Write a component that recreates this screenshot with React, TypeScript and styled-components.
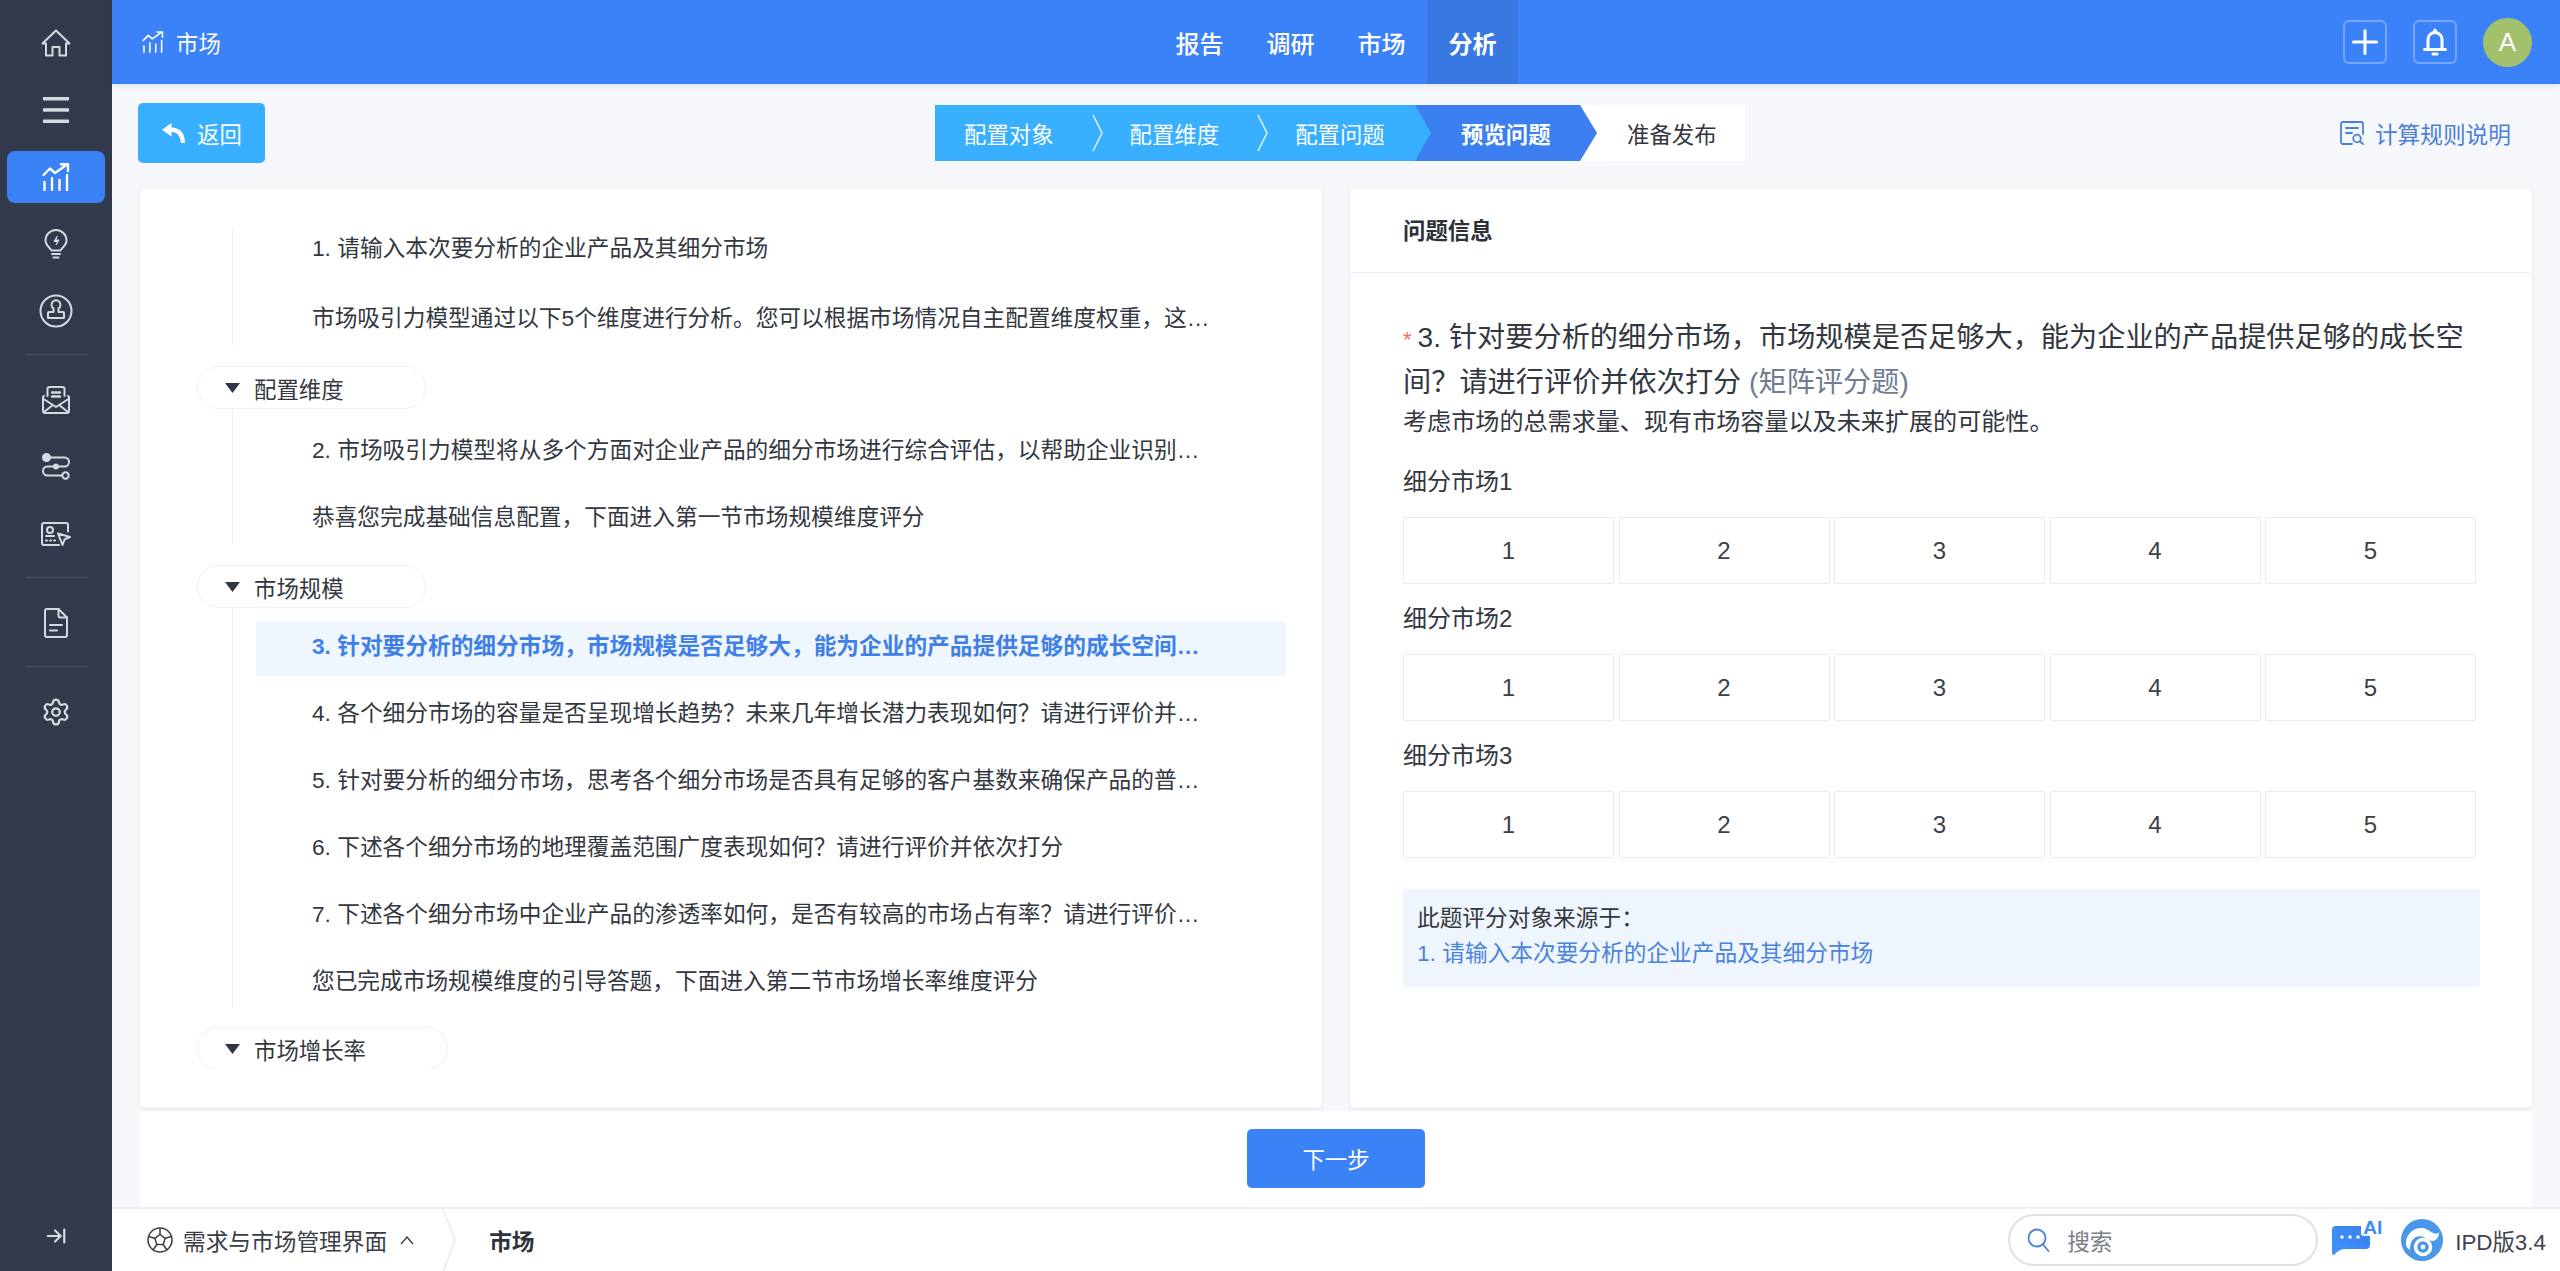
import React from "react";
import styled, { createGlobalStyle } from "styled-components";
import { ArrowRightToLine, Settings } from "lucide-react";

const FONT = `"Liberation Sans", "Noto Sans CJK SC", sans-serif`;

const Global = createGlobalStyle`
  html, body { margin: 0; padding: 0; background: #f5f7fb; }
  body { font-family: ${FONT}; color: #33373f; overflow: hidden; }
  * { box-sizing: border-box; }
`;

const Page = styled.div`
  display: flex;
  width: 2560px;
  height: 1271px;
  overflow: hidden;
  background: #f5f7fb;
`;

/* ---------- sidebar ---------- */
const Sidebar = styled.nav`
  width: 112px;
  flex: none;
  display: flex;
  flex-direction: column;
  align-items: center;
  padding-top: 9px;
  background: #323a4b;
  color: #d5d9e0;
`;
const NavItem = styled.div`
  width: 100%;
  height: 67px;
  flex: none;
  display: flex;
  align-items: center;
  justify-content: center;
`;
const NavActive = styled.div`
  width: 98px;
  height: 52px;
  border-radius: 8px;
  background: #3b82f6;
  color: #fff;
  display: flex;
  align-items: center;
  justify-content: center;
`;
const NavDivider = styled.div`
  width: 63px;
  height: 1px;
  flex: none;
  margin: 10px 0 11px;
  background: #4a5264;
`;
const Collapse = styled.div`
  margin-top: auto;
  margin-bottom: 24px;
  display: flex;
  color: #d5d9e0;
`;

/* ---------- main column ---------- */
const Main = styled.div`
  flex: 1;
  min-width: 0;
  display: flex;
  flex-direction: column;
`;
const TopBar = styled.header`
  height: 84px;
  flex: none;
  display: grid;
  grid-template-columns: 1fr auto 1fr;
  align-items: stretch;
  background: #3b82f8;
  color: #fff;
  box-shadow: 0 2px 8px rgba(40, 60, 100, 0.08);
`;
const Brand = styled.div`
  display: flex;
  align-items: center;
  gap: 12px;
  padding-left: 30px;
  font-size: 22.4px;
`;
const Tabs = styled.div`
  display: flex;
`;
const Tab = styled.div<{ $active?: boolean }>`
  width: 91px;
  display: flex;
  align-items: center;
  justify-content: center;
  font-size: 24px;
  font-weight: ${(p) => (p.$active ? 700 : 500)};
  background: ${(p) => (p.$active ? "#3878e2" : "transparent")};
`;
const Actions = styled.div`
  display: flex;
  align-items: center;
  justify-content: flex-end;
  gap: 26px;
  padding-right: 28px;
`;
const IconBox = styled.div`
  width: 44px;
  height: 44px;
  border: 2px solid rgba(255, 255, 255, 0.3);
  border-radius: 6px;
  display: flex;
  align-items: center;
  justify-content: center;
`;
const Avatar = styled.div`
  width: 49px;
  height: 49px;
  border-radius: 50%;
  background: #a3c16c;
  display: flex;
  align-items: center;
  justify-content: center;
  font-size: 26px;
  color: #fff;
`;

const Toolbar = styled.div`
  height: 105px;
  flex: none;
  display: grid;
  grid-template-columns: 1fr auto 1fr;
  align-items: start;
  padding: 19px 18px 0 26px;
`;
const BackButton = styled.button`
  width: 127px;
  height: 60px;
  border: 0;
  border-radius: 5px;
  background: #38b0ff;
  color: #fff;
  font: 22.4px ${FONT};
  display: flex;
  align-items: center;
  gap: 12px;
  padding: 0 0 0 24px;
`;
const Steps = styled.div`
  display: flex;
  height: 56px;
  margin-top: 2px;
  font-size: 22.4px;
`;
const StepDone = styled.div`
  position: relative;
  z-index: 3;
  width: 496px;
  display: flex;
  align-items: center;
  padding-left: 29px;
  color: #fff;
  background: #38b0ff;
  clip-path: polygon(0 0, 480px 0, 496px 50%, 480px 100%, 0 100%);
`;
const StepSep = styled.svg`
  width: 11px;
  height: 36px;
  margin: 0 27px 0 38px;
  flex: none;
`;
const StepCurrent = styled.div`
  position: relative;
  z-index: 2;
  width: 182px;
  margin-left: -16px;
  display: flex;
  align-items: center;
  padding-left: 46px;
  color: #fff;
  font-weight: 700;
  background: #3b7ff0;
  clip-path: polygon(0 0, 165px 0, 182px 50%, 165px 100%, 0 100%);
`;
const StepNext = styled.div`
  width: 165px;
  margin-left: -17px;
  display: flex;
  align-items: center;
  padding-left: 47px;
  background: #fff;
  color: #33373f;
`;
const RuleLink = styled.div`
  justify-self: end;
  display: flex;
  align-items: center;
  gap: 11px;
  height: 60px;
  margin-right: 31px;
  font-size: 22.7px;
  color: #4a80d8;
`;

const Panels = styled.div`
  height: 919px;
  flex: none;
  display: grid;
  grid-template-columns: 1182px 1182px;
  gap: 28px;
  padding: 0 28px;
`;
const Panel = styled.section`
  background: #fff;
  min-width: 0;
  border-radius: 4px;
  box-shadow: 0 1px 3px rgba(60, 80, 120, 0.12);
`;

/* ---------- tree ---------- */
const TreeScroll = styled.div`
  height: 880px;
  overflow: hidden;
  padding-top: 39px;
  padding-right: 36px;
`;
const TreeGroup = styled.div<{ $first?: boolean; $top?: number }>`
  margin-left: 92px;
  border-left: 1px solid #eef0f4;
  padding-top: ${(p) => p.$top ?? 0}px;
  padding-left: 23px;
  display: flex;
  flex-direction: column;
  gap: ${(p) => (p.$first ? 15 : 12)}px;
  & > :first-child {
    margin-top: ${(p) => (p.$first ? -5 : 0)}px;
  }
  & > :last-child {
    margin-bottom: -3px;
  }
`;
const TreeRow = styled.div<{ $active?: boolean }>`
  height: 55px;
  flex: none;
  padding: 0 74px 4px 56px;
  line-height: 51px;
  font-size: 22.7px;
  white-space: nowrap;
  overflow: hidden;
  text-overflow: ellipsis;
  border-radius: 3px;
  color: ${(p) => (p.$active ? "#3f80e8" : "#33373f")};
  font-weight: ${(p) => (p.$active ? 700 : 400)};
  background: ${(p) => (p.$active ? "#eff6fe" : "transparent")};
`;
const TreePill = styled.div<{ $gap?: number }>`
  display: inline-flex;
  align-items: center;
  align-self: flex-start;
  gap: 14px;
  height: 43px;
  margin: ${(p) => p.$gap ?? 21}px 0 0 57px;
  padding: 0 81px 0 27px;
  border: 1px solid #f0f1f5;
  border-radius: 22px;
  background: #fff;
  font-size: 22.4px;
  white-space: nowrap;
  flex: none;
`;
const Caret = styled.svg`
  width: 15px;
  height: 10px;
  flex: none;
`;
const TreeRoot = styled.div`
  display: flex;
  flex-direction: column;
`;

/* ---------- question ---------- */
const PanelHead = styled.div`
  height: 84px;
  display: flex;
  align-items: center;
  padding: 0 0 3px 53px;
  border-bottom: 1px solid #eef0f3;
  font-size: 22.4px;
  font-weight: 700;
  color: #2c3038;
`;
const PanelBody = styled.div`
  padding: 43px 56px 0 53px;
`;
const Question = styled.div`
  font-size: 28.2px;
  line-height: 42px;
  color: #33373f;
  white-space: nowrap;
`;
const Required = styled.span`
  color: #f56c6c;
  font-size: 22px;
  margin-right: 6px;
`;
const QuestionType = styled.span`
  color: #6f7c91;
`;
const Hint = styled.div`
  margin-top: 1px;
  font-size: 24.1px;
  line-height: 36px;
`;
const MatrixLabel = styled.div<{ $first?: boolean }>`
  margin-top: ${(p) => (p.$first ? 24 : 17)}px;
  font-size: 24px;
  line-height: 36px;
`;
const Cells = styled.div`
  display: grid;
  grid-template-columns: repeat(5, 211px);
  gap: 4.5px;
  margin-top: 17px;
`;
const Cell = styled.div`
  height: 67px;
  display: flex;
  align-items: center;
  justify-content: center;
  border: 1px solid #e8eaee;
  border-radius: 2px;
  font-size: 24px;
  color: #3c4048;
`;
const SourceBox = styled.div`
  width: 1077px;
  height: 98px;
  margin-top: 31px;
  padding: 12px 14px;
  background: #eff5fc;
  font-size: 22.7px;
  line-height: 35px;
`;
const SourceLink = styled.div`
  color: #4a83dc;
`;

/* ---------- actions / footer ---------- */
const ActionBar = styled.div`
  height: 96px;
  flex: none;
  margin: 3px 28px 0;
  padding-bottom: 2px;
  background: #fff;
  display: flex;
  align-items: center;
  justify-content: center;
`;
const NextButton = styled.button`
  width: 178px;
  height: 59px;
  border: 0;
  border-radius: 5px;
  background: #3b82f6;
  color: #fff;
  font: 22.4px ${FONT};
`;
const Footer = styled.footer`
  flex: 1;
  min-height: 0;
  display: flex;
  align-items: center;
  padding: 0 14px 0 35px;
  background: #fff;
  border-top: 2px solid #eef0f3;
  font-size: 22.7px;
`;
const ModuleName = styled.div`
  display: flex;
  align-items: center;
  gap: 10px;
  color: #3a3e46;
`;
const UpCaret = styled.svg`
  width: 14px;
  height: 10px;
  margin-left: 3px;
`;
const CrumbSep = styled.svg`
  width: 14px;
  height: 63px;
  margin: 0 33px 0 28px;
  flex: none;
`;
const CrumbCurrent = styled.div`
  font-weight: 700;
  color: #2f333b;
`;
const FooterRight = styled.div`
  margin-left: auto;
  display: flex;
  align-items: center;
`;
const SearchBox = styled.div`
  width: 310px;
  height: 52px;
  display: flex;
  align-items: center;
  gap: 17px;
  padding-left: 17px;
  border: 2px solid #dfe1e5;
  border-radius: 26px;
  color: #7b7f86;
`;
const AiBadge = styled.div`
  position: relative;
  width: 51px;
  height: 36px;
  margin: -4px 0 0 13px;
`;
const AiText = styled.span`
  position: absolute;
  top: -1px;
  right: 0;
  font-size: 19px;
  font-weight: 700;
  color: #3b8cf6;
  background: #fff;
  border-radius: 3px 0 0 3px;
  line-height: 17px;
  padding-left: 2px;
`;
const LogoWrap = styled.div`
  display: flex;
  align-items: center;
  gap: 12px;
  margin-left: 19px;
  font-size: 22.4px;
  color: #40444c;
`;

/* ---------- icons ---------- */
const line = {
  fill: "none",
  stroke: "currentColor",
  strokeWidth: 2,
  strokeLinecap: "round" as const,
  strokeLinejoin: "round" as const,
};

const HomeIcon = () => (
  <svg width="30" height="28" viewBox="0 0 30 28" {...line}>
    <path d="M1.5 14.5 15 1.5l13.5 13H25V26.5h-6.5V18h-7v8.500H5V14.500Z" />
  </svg>
);
const MenuIcon = () => (
  <svg width="26" height="26" viewBox="0 0 26 26" fill="currentColor">
    <rect x="0" y="0" width="26" height="3.500" />
    <rect x="0" y="11.200" width="26" height="3.500" />
    <rect x="0" y="22.500" width="26" height="3.500" />
  </svg>
);
const TrendIcon = ({ size = 28, width = 2.4 }: { size?: number; width?: number }) => (
  <svg width={size} height={size} viewBox="0 0 28 28" {...line} strokeWidth={width}>
    <path d="M1.500 12 8 5.500l5 4.500L25 1.500" />
    <path d="M19 1.200h7V8" />
    <path d="M2.500 19v8M10 15v12M17.500 17v10M25 12v15" />
  </svg>
);
const BulbIcon = () => (
  <svg width="24" height="30" viewBox="0 0 24 30" {...line}>
    <path d="M7.500 21.500C7 19 1.500 17 1.500 11.500a10.500 10.500 0 0 1 21 0c0 5.500-5.500 7.500-6 10Z" />
    <path d="M8 25h8M9.500 28.500h5" />
    <path d="M13 7.500 10 12.500h3.500l-1.500 3.500 3-5H12Z" fill="currentColor" strokeWidth={1} />
  </svg>
);
const StampIcon = () => (
  <svg width="34" height="34" viewBox="0 0 34 34" {...line}>
    <circle cx="17" cy="17" r="15.500" />
    <path d="M14.500 14.500a4.500 4.500 0 1 1 5 0V18H24a1 1 0 0 1 1 1v5H9v-5a1 1 0 0 1 1-1h4.500Z" />
  </svg>
);
const MailIcon = () => (
  <svg width="28" height="28" viewBox="0 0 28 28" {...line}>
    <path d="M5.500 10V3a2 2 0 0 1 2-2h13a2 2 0 0 1 2 2v7" />
    <path d="M2 10 1 11v14a2 2 0 0 0 2 2h22a2 2 0 0 0 2-2V11l-1-1" />
    <path d="M1.500 13 14 21l12.500-8M2 26l9-7M26 26l-9-7" />
    <path d="M10 6.500h8M10 10.500h8" strokeWidth={2.400} />
  </svg>
);
const FlowIcon = () => (
  <svg width="28" height="28" viewBox="0 0 28 28" {...line}>
    <circle cx="4.500" cy="4.500" r="3.500" fill="currentColor" />
    <path d="M8 4.500h14.500a4.500 4.500 0 0 1 0 9h-17a4.500 4.500 0 0 0 0 9H20" />
    <circle cx="23.500" cy="22.500" r="3.200" />
    <circle cx="14" cy="13.500" r="2" fill="currentColor" />
  </svg>
);
const CardIcon = () => (
  <svg width="30" height="24" viewBox="0 0 30 24" {...line}>
    <path d="M27 9.500V3a2 2 0 0 0-2-2H3a2 2 0 0 0-2 2v18a2 2 0 0 0 2 2h15" />
    <circle cx="9" cy="8" r="3" />
    <path d="M5 14h8" />
    <path d="M5 18.500h1M9 18.500h1M13 18.500h1" />
    <path d="M17 11.500 29 15l-5.500 2.500L21.500 23Z" />
  </svg>
);
const DocIcon = () => (
  <svg width="24" height="30" viewBox="0 0 24 30" {...line}>
    <path d="M14.500 1H3a2 2 0 0 0-2 2v24a2 2 0 0 0 2 2h18a2 2 0 0 0 2-2V9.500Z" />
    <path d="M14.500 1v6.500a2 2 0 0 0 2 2H23" />
    <path d="M6 17h12M6 22.500h7" />
  </svg>
);
const PlusIcon = () => (
  <svg width="26" height="26" viewBox="0 0 26 26" fill="none" stroke="#fff" strokeWidth={3} strokeLinecap="round">
    <path d="M13 1.500v23M1.500 13h23" />
  </svg>
);
const BellIcon = () => (
  <svg width="24" height="28" viewBox="0 0 24 28" fill="none" stroke="#fff" strokeWidth={3} strokeLinecap="round" strokeLinejoin="round">
    <path d="M5 21V11.500a7 7 0 0 1 14 0V21" />
    <path d="M1.500 21.500h21" />
    <circle cx="12" cy="2.500" r="1.500" fill="#fff" strokeWidth={1} />
    <path d="M10 26h4" />
  </svg>
);
const BackIcon = () => (
  <svg width="23" height="20" viewBox="0 0 23 20" fill="#fff">
    <path d="M9.500 0 0 6.800l9.500 6.700V9c6 0 8.500 3.500 9.500 11h4C23 10 18 4.800 9.500 4.500Z" />
  </svg>
);
const RuleIcon = () => (
  <svg width="24" height="24" viewBox="0 0 24 24" fill="none" stroke="#4a80d8" strokeWidth={1.800} strokeLinecap="round" strokeLinejoin="round">
    <path d="M12 23H3a2 2 0 0 1-2-2V3a2 2 0 0 1 2-2h18a2 2 0 0 1 2 2v10" />
    <path d="M6 7h12M6 12h6" />
    <circle cx="17" cy="17.500" r="3.800" />
    <path d="m20 20.500 3 2.500" />
  </svg>
);
const WheelIcon = () => (
  <svg width="26" height="26" viewBox="0 0 26 26" fill="none" stroke="#3a3e46" strokeWidth={1.500} strokeLinejoin="round">
    <circle cx="13" cy="13" r="12" />
    <path d="M13 7.500 18.200 11.300 16.200 17.500H9.800L7.800 11.300Z" />
    <path d="M13 7.500V1.200M18.200 11.300 24.500 9.500M16.200 17.500 20 23M9.800 17.500 6 23M7.800 11.300 1.500 9.500" />
  </svg>
);
const SearchIcon = () => (
  <svg width="23" height="24" viewBox="0 0 23 24" fill="none" strokeWidth={1.800} strokeLinecap="round">
    <circle cx="10" cy="10" r="8.500" stroke="#4a80d8" />
    <path d="m16.500 17 5 6" stroke="#5a7fb8" />
  </svg>
);
const ChatIcon = () => (
  <svg width="40" height="31" viewBox="0 0 40 31" style={{ position: "absolute", left: 0, bottom: 0 }}>
    <defs>
      <linearGradient id="chat" x1="0" y1="1" x2="1" y2="0">
        <stop offset="0" stopColor="#3f94fb" />
        <stop offset="1" stopColor="#3a7ff0" />
      </linearGradient>
    </defs>
    <path d="M5 1h30a4 4 0 0 1 4 4v15a4 4 0 0 1-4 4H14C9 24 6 27 3 30 1 30 1 28 1 26V5a4 4 0 0 1 4-4Z" fill="url(#chat)" />
    <circle cx="11" cy="12" r="1.800" fill="#fff" />
    <circle cx="19" cy="12" r="1.800" fill="#fff" />
    <circle cx="27" cy="12" r="1.800" fill="#fff" />
  </svg>
);
const LogoIcon = () => (
  <svg width="42" height="42" viewBox="0 0 42 42">
    <circle cx="21" cy="21" r="21" fill="#4a97ea" />
    <path d="M5 26C4 16 12 8 22 9c4 .5 6 3 10 5 3 1 5 1 6-1 0 7-5 11-10 8-4-2-8-5-13-3-4 2-6 6-6 13-2-1-3.500-3-4-5Z" fill="#fff" />
    <circle cx="22" cy="28" r="7.500" fill="none" stroke="#fff" strokeWidth={3.500} />
    <circle cx="22" cy="28" r="2.400" fill="#fff" />
  </svg>
);
const CaretDown = () => (
  <Caret viewBox="0 0 15 10">
    <path d="M0 0h15L7.500 10Z" fill="#2f3644" />
  </Caret>
);

const StepChevron = () => (
  <StepSep viewBox="0 0 11 36" fill="none" stroke="rgba(255,255,255,.85)" strokeWidth={1.500}>
    <path d="M1 0l9 18-9 18" />
  </StepSep>
);

const matrixRows = ["细分市场1", "细分市场2", "细分市场3"];

const Tree = () => (
  <TreeRoot>
    <TreeGroup $first>
      <TreeRow>1. 请输入本次要分析的企业产品及其细分市场</TreeRow>
      <TreeRow>市场吸引力模型通过以下5个维度进行分析。您可以根据市场情况自主配置维度权重，这些权重将用于后续的综合评估计算</TreeRow>
    </TreeGroup>
    <TreePill>
      <CaretDown />
      配置维度
    </TreePill>
    <TreeGroup $top={16}>
      <TreeRow>2. 市场吸引力模型将从多个方面对企业产品的细分市场进行综合评估，以帮助企业识别最具潜力的市场</TreeRow>
      <TreeRow>恭喜您完成基础信息配置，下面进入第一节市场规模维度评分</TreeRow>
    </TreeGroup>
    <TreePill>
      <CaretDown />
      市场规模
    </TreePill>
    <TreeGroup $top={13}>
      <TreeRow $active>3. 针对要分析的细分市场，市场规模是否足够大，能为企业的产品提供足够的成长空间？请进行评价并依次打分</TreeRow>
      <TreeRow>4. 各个细分市场的容量是否呈现增长趋势？未来几年增长潜力表现如何？请进行评价并依次打分</TreeRow>
      <TreeRow>5. 针对要分析的细分市场，思考各个细分市场是否具有足够的客户基数来确保产品的普及？请进行评价</TreeRow>
      <TreeRow>6. 下述各个细分市场的地理覆盖范围广度表现如何？请进行评价并依次打分</TreeRow>
      <TreeRow>7. 下述各个细分市场中企业产品的渗透率如何，是否有较高的市场占有率？请进行评价并依次打分</TreeRow>
      <TreeRow>您已完成市场规模维度的引导答题，下面进入第二节市场增长率维度评分</TreeRow>
    </TreeGroup>
    <TreePill $gap={19}>
      <CaretDown />
      市场增长率
    </TreePill>
  </TreeRoot>
);

export default function App() {
  return (
    <Page>
      <Global />
      <Sidebar>
        <NavItem><HomeIcon /></NavItem>
        <NavItem><MenuIcon /></NavItem>
        <NavItem><NavActive><TrendIcon /></NavActive></NavItem>
        <NavItem><BulbIcon /></NavItem>
        <NavItem><StampIcon /></NavItem>
        <NavDivider />
        <NavItem><MailIcon /></NavItem>
        <NavItem><FlowIcon /></NavItem>
        <NavItem><CardIcon /></NavItem>
        <NavDivider />
        <NavItem><DocIcon /></NavItem>
        <NavDivider />
        <NavItem><Settings size={30} strokeWidth={1.800} /></NavItem>
        <Collapse><ArrowRightToLine size={22} strokeWidth={2.400} /></Collapse>
      </Sidebar>
      <Main>
        <TopBar>
          <Brand>
            <TrendIcon size={22} width={2} />
            市场
          </Brand>
          <Tabs>
            <Tab>报告</Tab>
            <Tab>调研</Tab>
            <Tab>市场</Tab>
            <Tab $active>分析</Tab>
          </Tabs>
          <Actions>
            <IconBox><PlusIcon /></IconBox>
            <IconBox><BellIcon /></IconBox>
            <Avatar>A</Avatar>
          </Actions>
        </TopBar>
        <Toolbar>
          <BackButton><BackIcon />返回</BackButton>
          <Steps>
            <StepDone>
              配置对象
              <StepChevron />
              配置维度
              <StepChevron />
              配置问题
            </StepDone>
            <StepCurrent>预览问题</StepCurrent>
            <StepNext>准备发布</StepNext>
          </Steps>
          <RuleLink><RuleIcon />计算规则说明</RuleLink>
        </Toolbar>
        <Panels>
          <Panel>
            <TreeScroll><Tree /></TreeScroll>
          </Panel>
          <Panel>
            <PanelHead>问题信息</PanelHead>
            <PanelBody>
              <Question>
                <Required>*</Required>3. 针对要分析的细分市场，市场规模是否足够大，能为企业的产品提供足够的成长空<br />
                间？请进行评价并依次打分 <QuestionType>(矩阵评分题)</QuestionType>
              </Question>
              <Hint>考虑市场的总需求量、现有市场容量以及未来扩展的可能性。</Hint>
              {matrixRows.map((label, i) => (
                <React.Fragment key={label}>
                  <MatrixLabel $first={i === 0}>{label}</MatrixLabel>
                  <Cells>
                    {[1, 2, 3, 4, 5].map((n) => (
                      <Cell key={n}>{n}</Cell>
                    ))}
                  </Cells>
                </React.Fragment>
              ))}
              <SourceBox>
                此题评分对象来源于：
                <SourceLink>1. 请输入本次要分析的企业产品及其细分市场</SourceLink>
              </SourceBox>
            </PanelBody>
          </Panel>
        </Panels>
        <ActionBar>
          <NextButton>下一步</NextButton>
        </ActionBar>
        <Footer>
          <ModuleName>
            <WheelIcon />
            需求与市场管理界面
            <UpCaret viewBox="0 0 14 10" fill="none" stroke="#3a3e46" strokeWidth={1.400}>
              <path d="M1 9l6-7 6 7" />
            </UpCaret>
          </ModuleName>
          <CrumbSep viewBox="0 0 14 63" fill="none" stroke="#e8eaee" strokeWidth={1.500}>
            <path d="M1 0l12 31L1 63" />
          </CrumbSep>
          <CrumbCurrent>市场</CrumbCurrent>
          <FooterRight>
            <SearchBox>
              <SearchIcon />
              搜索
            </SearchBox>
            <AiBadge>
              <ChatIcon />
              <AiText>AI</AiText>
            </AiBadge>
            <LogoWrap>
              <LogoIcon />
              IPD版3.4
            </LogoWrap>
          </FooterRight>
        </Footer>
      </Main>
    </Page>
  );
}
